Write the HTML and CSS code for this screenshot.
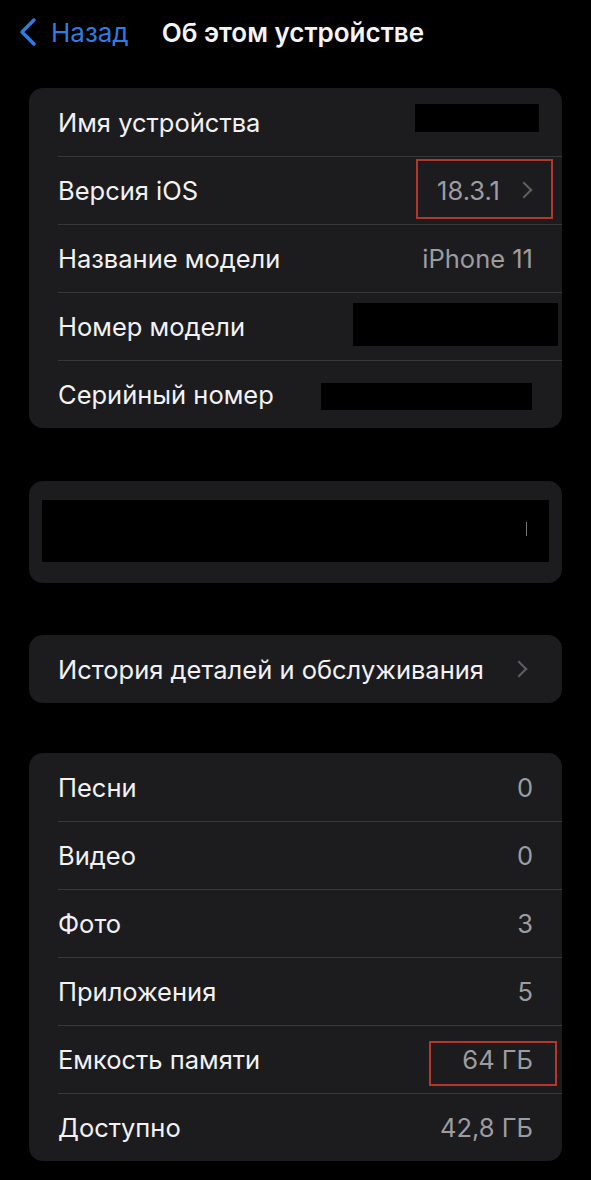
FILE: index.html
```html
<!DOCTYPE html>
<html lang="ru">
<head>
<meta charset="utf-8">
<title>Об этом устройстве</title>
<link rel="stylesheet" href="styles.css">
</head>
<body>
<header class="nav">
  <a class="back">
    <svg class="back-icon" width="20" height="30" viewBox="0 0 20 30"><polyline points="16,3 4,15 16,27" fill="none" stroke="#2f7de1" stroke-width="3.4" stroke-linecap="round" stroke-linejoin="round"/></svg>
    <span>Назад</span>
  </a>
  <h1 class="title">Об этом устройстве</h1>
</header>

<main class="content">
  <section class="group">
    <div class="row"><span class="label">Имя устройства</span><span class="redact r-name"></span></div>
    <div class="row"><span class="label">Версия iOS</span><span class="value">18.3.1</span><span class="chev"></span><span class="mark m-ios"></span></div>
    <div class="row"><span class="label">Название модели</span><span class="value">iPhone 11</span></div>
    <div class="row"><span class="label">Номер модели</span><span class="redact r-model"></span></div>
    <div class="row"><span class="label">Серийный номер</span><span class="redact r-serial"></span></div>
  </section>

  <section class="group group-hidden">
    <div class="redact-block"><span class="tick"></span></div>
  </section>

  <section class="group">
    <div class="row"><span class="label">История деталей и обслуживания</span><span class="chev chev-only"></span></div>
  </section>

  <section class="group group-last">
    <div class="row"><span class="label">Песни</span><span class="value">0</span></div>
    <div class="row"><span class="label">Видео</span><span class="value">0</span></div>
    <div class="row"><span class="label">Фото</span><span class="value">3</span></div>
    <div class="row"><span class="label">Приложения</span><span class="value">5</span></div>
    <div class="row"><span class="label">Емкость памяти</span><span class="value">64 ГБ</span><span class="mark m-cap"></span></div>
    <div class="row"><span class="label">Доступно</span><span class="value">42,8 ГБ</span></div>
  </section>
</main>
</body>
</html>
```
FILE: styles.css
```css
* { box-sizing: border-box; }

body {
  margin: 0;
  background: #000;
  font-family: "Inter", "Roboto", "Liberation Sans", sans-serif;
  color: #f2f2f4;
  width: 591px;
  height: 1180px;
  overflow: hidden;
}

.nav {
  height: 64px;
  display: flex;
  align-items: center;
  padding-left: 18px;
}

.back {
  display: flex;
  align-items: center;
  gap: 13px;
  color: #2f7de1;
  font-size: 26px;
}

.back-icon { display: block; }

.title {
  margin: 0 0 0 33px;
  font-size: 26px;
  font-weight: 600;
  color: #f5f5f7;
}

.content {
  padding: 24px 29px 0;
  display: flex;
  flex-direction: column;
  gap: 52px;
}

.group {
  background: #1c1c1e;
  border-radius: 14px;
  overflow: hidden;
}

.group-last { margin-top: -2px; }

.row {
  position: relative;
  height: 68px;
  display: flex;
  align-items: center;
  padding: 0 29px;
  font-size: 25.5px;
}

.row + .row::before {
  content: "";
  position: absolute;
  top: 0;
  left: 29px;
  right: 0;
  height: 1px;
  background: #38383b;
}

.label { flex: 1; }

.value { color: #9c9ca1; }

.chev {
  width: 12px;
  height: 12px;
  border-top: 2.5px solid #5e5e63;
  border-right: 2.5px solid #5e5e63;
  transform: rotate(45deg);
  margin: 0 3px 0 18px;
}

.chev-only { margin-right: 8px; }

.redact {
  position: absolute;
  background: #000;
}
.r-name { left: 386px; top: 16px; width: 124px; height: 28px; }
.r-model { left: 324px; top: 11px; width: 205px; height: 43px; }
.r-serial { left: 292px; top: 23px; width: 211px; height: 27px; }

.mark {
  position: absolute;
  border: 2px solid #b5372c;
}
.m-ios { left: 387px; top: 3px; width: 137px; height: 60px; }
.m-cap { left: 400px; top: 16px; width: 128px; height: 45px; }

.group-hidden {
  height: 102px;
  padding: 19px 13px 21px 13px;
  margin-top: 1px;
}

.redact-block {
  position: relative;
  height: 62px;
  width: 507px;
  background: #000;
}

.tick {
  position: absolute;
  left: 484px;
  top: 22px;
  width: 1px;
  height: 14px;
  background: #777;
}
```
